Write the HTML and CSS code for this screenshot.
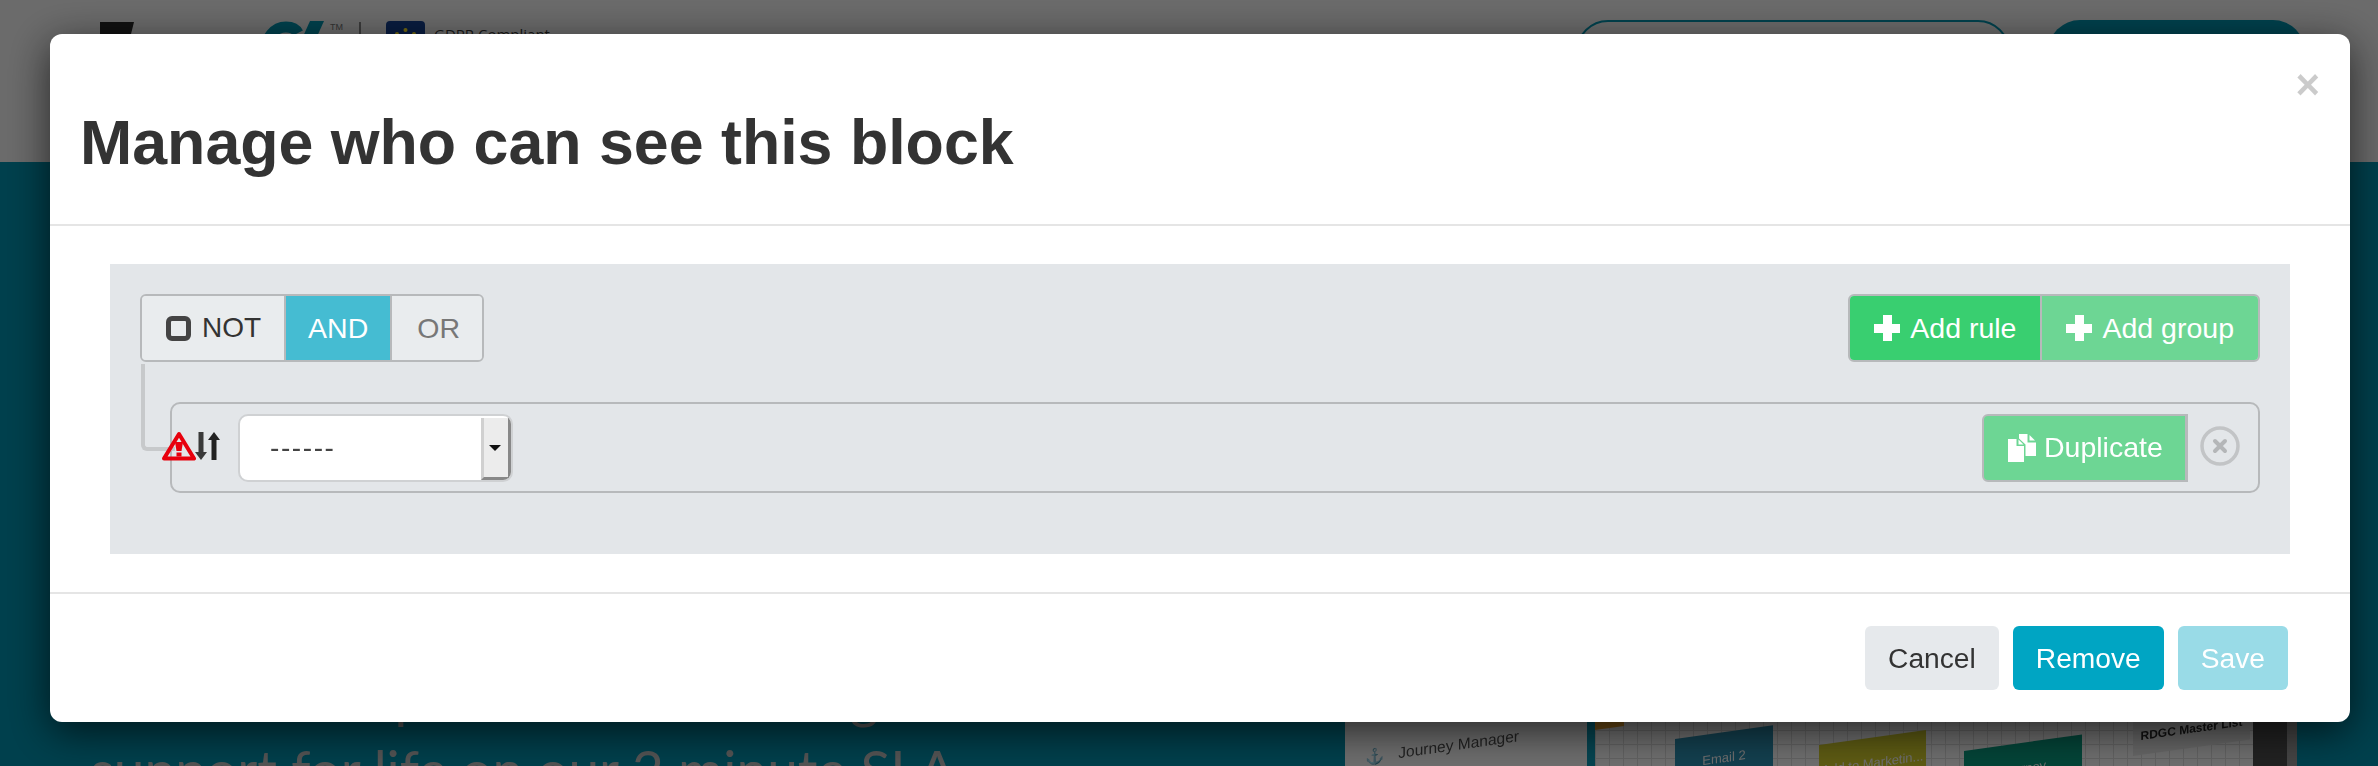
FILE: index.html
```html
<!DOCTYPE html>
<html lang="en">
<head>
    <meta charset="UTF-8">
    <meta name="viewport" content="width=device-width, initial-scale=1.0">
    <title>Manage who can see this block</title>
    <link rel="stylesheet" href="styles.css">
</head>
<body>
    <div class="page">
        <header class="site-header">
            <div class="logo">
                <svg class="logo-mark" viewBox="0 0 34 40">
                    <path d="M0 0 H34 L31 12 H14 V40 H0 Z" fill="#222"/>
                </svg>
                <svg class="logo-swoosh" viewBox="0 0 64 40">
                    <path d="M4 40 C4 14 16 6 26 6 C32 6 36 8 38 12" fill="none" stroke="#00839b" stroke-width="11"/>
                    <path d="M50 0 H64 L46 40 H32 Z" fill="#00839b"/>
                </svg>
                <span class="logo-tm">TM</span>
                <span class="logo-sep"></span>
                <svg class="eu-flag" viewBox="0 0 39 40">
                    <rect width="39" height="40" rx="4" fill="#12397f"/>
                    <circle cx="11" cy="13" r="2" fill="#e8d020"/>
                    <circle cx="19.5" cy="9" r="2" fill="#e8d020"/>
                    <circle cx="28" cy="13" r="2" fill="#e8d020"/>
                </svg>
                <span class="gdpr">GDPR Compliant</span>
            </div>
            <div class="header-actions">
                <span class="pill pill-outline"></span>
                <span class="pill pill-solid"></span>
            </div>
        </header>
        <section class="hero">
            <div class="hero-text">
                <p>Unlimited expert live onboarding and</p>
                <p>support for life on our 2 minute SLA</p>
            </div>
            <div class="hero-shot">
                <div class="shot-side"><span class="shot-label"><span class="shot-anchor">&#9875;</span> Journey Manager</span></div>
                <div class="shot-canvas">
                    <span class="tile tile-orange"></span>
                    <span class="tile tile-blue">Email 2</span>
                    <span class="tile tile-yellow">Add to Marketin...</span>
                    <span class="tile tile-green">Journey</span>
                    <span class="tile tile-grey">RDGC Master List</span>
                </div>
            </div>
        </section>
    </div>

    <div class="backdrop"></div>

    <div class="modal">
        <div class="modal-header">
            <button class="close">&times;</button>
            <h2>Manage who can see this block</h2>
        </div>
        <div class="modal-body">
            <div class="rules-group">
                <div class="group-head">
                    <div class="btn-group">
                        <button class="btn btn-plain btn-not"><span class="check"></span> NOT</button>
                        <button class="btn btn-info btn-logic">AND</button>
                        <button class="btn btn-plain btn-muted btn-logic">OR</button>
                    </div>
                    <div class="btn-group">
                        <button class="btn btn-success"><span class="plus"></span> Add rule</button>
                        <button class="btn btn-success disabled"><span class="plus"></span> Add group</button>
                    </div>
                </div>
                <div class="rule">
                    <svg class="warn" viewBox="0 0 34 30">
                        <path d="M17 3 L32 27.5 H2 Z" fill="none" stroke="#e8000d" stroke-width="4" stroke-linejoin="round"/>
                        <path d="M13 11 H21 L19.5 20 H14.5 Z" fill="#e8000d"/>
                        <rect x="14.5" y="21.5" width="5" height="4" fill="#e8000d"/>
                    </svg>
                    <svg class="sort" viewBox="0 0 25 28">
                        <path d="M3.5 0 H8.5 V20 H12 L6 28 L0 20 H3.5 Z" fill="#3a3a3a"/>
                        <path d="M16.5 28 H21.5 V8 H25 L19 0 L13 8 H16.5 Z" fill="#222"/>
                    </svg>
                    <div class="select">
                        <span class="select-value">------</span>
                        <span class="select-arrow"></span>
                    </div>
                    <div class="rule-actions">
                        <button class="btn btn-success disabled btn-dup">
                            <svg class="dup-icon" viewBox="0 0 28 28">
                                <path d="M0 5 H8.5 V12 H16 V28 H0 Z" fill="#fff"/>
                                <path d="M10.5 5.5 L15.5 10.5 H10.5 Z" fill="#fff"/>
                                <path d="M11 0 H19.5 V8.5 H28 V22 H17.5 V10.5 L11 4.5 Z" fill="#fff"/>
                                <path d="M21.5 1 L27 6.5 H21.5 Z" fill="#fff"/>
                            </svg>
                            Duplicate
                        </button>
                        <svg class="remove" viewBox="0 0 40 40">
                            <circle cx="20" cy="20" r="18" fill="none" stroke="#c2c4c6" stroke-width="3.5"/>
                            <path d="M15 15 L25 25 M25 15 L15 25" stroke="#b4b6b8" stroke-width="4" stroke-linecap="round"/>
                        </svg>
                    </div>
                </div>
            </div>
        </div>
        <div class="modal-footer">
            <button class="foot-btn foot-cancel">Cancel</button>
            <button class="foot-btn foot-remove">Remove</button>
            <button class="foot-btn foot-save">Save</button>
        </div>
    </div>
</body>
</html>
```
FILE: styles.css
```css
* {
    box-sizing: border-box;
}
html, body {
    margin: 0;
    height: 100%;
    overflow: hidden;
}
body {
    font-family: "Liberation Sans", Arial, sans-serif;
    color: #333;
}
button {
    font-family: inherit;
    cursor: pointer;
}

/* page behind the dialog */
.page {
    height: 100vh;
    display: flex;
    flex-direction: column;
    background: #00809a;
}
.site-header {
    height: 162px;
    background: #d6d6d6;
    display: flex;
    justify-content: space-between;
    padding: 20px 73px 0 100px;
}
.logo {
    display: flex;
    align-items: flex-start;
}
.logo-mark {
    width: 34px;
    height: 40px;
    margin-top: 2px;
}
.logo-swoosh {
    width: 64px;
    height: 40px;
    margin: 1px 0 0 126px;
}
.logo-tm {
    font-size: 9px;
    color: #666;
    margin: 2px 0 0 6px;
}
.logo-sep {
    width: 2px;
    height: 40px;
    background: #777;
    margin: 2px 0 0 16px;
}
.eu-flag {
    width: 39px;
    height: 40px;
    margin: 1px 0 0 25px;
}
.gdpr {
    font-family: "Open Sans", sans-serif;
    font-size: 15px;
    color: #333;
    margin: 4px 0 0 9px;
}
.header-actions {
    display: flex;
    gap: 38px;
}
.pill {
    height: 70px;
    border-radius: 32px;
}
.pill-outline {
    width: 434px;
    border: 2px solid #00839b;
}
.pill-solid {
    width: 257px;
    background: #00839b;
}
.hero {
    flex: 1;
    display: flex;
    justify-content: space-between;
    padding-right: 91px;
    align-items: flex-end;
}
.hero-text {
    padding-left: 90px;
    margin-bottom: -39px;
    font-family: "Lato", sans-serif;
    font-size: 55px;
    line-height: 72px;
    color: #aaa;
}
.hero-text p {
    margin: 0;
    white-space: nowrap;
}
.hero-shot {
    width: 942px;
    height: 260px;
    background: #e0e0e0;
    border-right: 34px solid #444;
    box-shadow: 10px 0 0 #8a8a8a;
    display: flex;
    overflow: hidden;
    filter: blur(0.7px);
}
.shot-side {
    width: 250px;
    flex: none;
    background: #dedede;
    border-right: 8px solid #0a8aa3;
    color: #444;
    font-size: 15.5px;
    padding: 232px 0 0 20px;
    white-space: nowrap;
}
.shot-label {
    display: inline-block;
    transform: skewY(-8deg);
}
.shot-anchor {
    margin-right: 10px;
}
.shot-canvas {
    flex: 1;
    position: relative;
    background-color: #e0e0e0;
    background-image: linear-gradient(#c6c6c6 1px, transparent 1px), linear-gradient(90deg, #c6c6c6 1px, transparent 1px);
    background-size: 14px 14px;
}
.tile {
    position: absolute;
    color: #ddd;
    font-size: 13px;
    text-align: center;
    transform-origin: 0 0;
    transform: skewY(-8deg);
    padding-top: 18px;
    height: 60px;
}
.tile-orange {
    left: 0;
    top: 192px;
    width: 29px;
    height: 32px;
    background: #d8962a;
}
.tile-blue {
    left: 80px;
    top: 233px;
    width: 98px;
    background: #27809f;
}
.tile-yellow {
    left: 224px;
    top: 239px;
    width: 107px;
    background: #bdb827;
}
.tile-green {
    left: 369px;
    top: 245px;
    width: 118px;
    background: #078a71;
}
.tile-grey {
    left: 538px;
    top: 190px;
    width: 117px;
    padding-top: 34px;
    font-size: 12px;
    white-space: nowrap;
    background: #cfcfcf;
    color: #222;
    font-weight: bold;
}

.backdrop {
    position: fixed;
    inset: 0;
    background: rgba(0, 0, 0, 0.5);
}

/* dialog */
.modal {
    position: fixed;
    left: 50px;
    top: 34px;
    width: 2300px;
    height: 688px;
    background: #fff;
    border-radius: 12px;
    box-shadow: 0 10px 40px rgba(0, 0, 0, 0.65);
    display: flex;
    flex-direction: column;
}
.modal-header {
    height: 192px;
    border-bottom: 2px solid #e5e5e5;
    padding: 0 30px;
}
.modal-header h2 {
    margin: 0;
    padding-top: 70px;
    font-size: 62.7px;
    line-height: 76px;
    font-weight: bold;
}
.close {
    float: right;
    border: 0;
    padding: 0;
    margin-top: 30px;
    background: none;
    font-size: 42px;
    line-height: 42px;
    font-weight: bold;
    color: #000;
    opacity: 0.2;
}
.modal-body {
    padding: 38px 60px 38px;
}
.rules-group {
    height: 290px;
    background: #e3e6e9;
    padding: 30px;
}
.group-head {
    display: flex;
    justify-content: space-between;
    margin-bottom: 40px;
}
.btn-group {
    display: flex;
    height: 68px;
    border: 2px solid #b7b9bb;
    border-radius: 6px;
    overflow: hidden;
}
.btn {
    border: 0;
    font-size: 28.5px;
    padding: 0 24px;
    display: flex;
    align-items: center;
    gap: 10px;
}
.btn-group .btn + .btn {
    border-left: 2px solid #b7b9bb;
}
.btn-plain {
    background: #e9ecee;
    color: #333;
}
.btn-muted {
    color: #777;
}
.btn-info {
    background: #45bcd2;
    color: #fff;
}
.btn-success {
    background: #39cf70;
    color: #fff;
}
.btn-success.disabled {
    background: #6dd694;
}
.btn-not {
    font-size: 28px;
    padding: 0 23px 0 24px;
    gap: 11px;
}
.btn-logic {
    padding: 0 22px;
}
.btn-muted.btn-logic {
    padding-left: 25px;
}
.check {
    width: 25px;
    height: 25px;
    border: 5px solid #444;
    border-radius: 6px;
}
.plus {
    width: 26px;
    height: 26px;
    background:
        linear-gradient(#fff, #fff) center / 100% 9px no-repeat,
        linear-gradient(#fff, #fff) center / 9px 100% no-repeat;
    border-radius: 2px;
}

.rule {
    position: relative;
    height: 91px;
    margin-left: 30px;
    border: 2px solid #b7b9bb;
    border-radius: 10px;
    display: flex;
    align-items: center;
    padding-left: 23px;
}
.rule::before {
    content: "";
    position: absolute;
    left: -31px;
    top: -40px;
    width: 30px;
    height: 83px;
    border-left: 4px solid #c7c9cb;
    border-bottom: 4px solid #c7c9cb;
    border-radius: 0 0 0 6px;
}
.warn {
    position: absolute;
    left: -10px;
    top: 27px;
    width: 34px;
    height: 30px;
}
.sort {
    width: 25px;
    height: 28px;
    flex: none;
    margin-bottom: 3px;
}
.select {
    width: 275px;
    height: 68px;
    margin-left: 18px;
    background: #fff;
    border: 2px solid #cfd1d3;
    border-radius: 10px;
    display: flex;
    justify-content: space-between;
    overflow: hidden;
}
.select-value {
    font-size: 28px;
    letter-spacing: 1.6px;
    color: #444;
    line-height: 64px;
    padding-left: 30px;
}
.select-arrow {
    width: 30px;
    margin-top: 2px;
    background: #ececec;
    border-left: 3px solid #d0d0d0;
    border-right: 3px solid #888;
    border-bottom: 3px solid #888;
    position: relative;
}
.select-arrow::after {
    content: "";
    position: absolute;
    left: 5px;
    top: 27px;
    border: 5px solid transparent;
    border-top: 6px solid #111;
    border-left-width: 6px;
    border-right-width: 6px;
}
.rule-actions {
    margin-left: auto;
    display: flex;
    align-items: center;
    gap: 12px;
    padding-right: 18px;
}
.btn-dup {
    width: 206px;
    height: 68px;
    border: 2px solid #b7b9bb;
    border-right-width: 3px;
    border-radius: 6px 0 0 6px;
    padding: 0 0 0 24px;
    gap: 8px;
}
.dup-icon {
    width: 28px;
    height: 28px;
    flex: none;
}
.remove {
    width: 40px;
    height: 40px;
    margin-bottom: 4px;
}

.modal-footer {
    flex: 1;
    border-top: 2px solid #e5e5e5;
    display: flex;
    justify-content: flex-end;
    gap: 14px;
    padding: 32px 62px 0 0;
}
.foot-btn {
    height: 64px;
    border: 0;
    border-radius: 6px;
    padding: 0 23px;
    font-size: 28.2px;
}
.foot-cancel {
    background: #e6e9ec;
    color: #333;
}
.foot-remove {
    background: #00a5c3;
    color: #fff;
}
.foot-save {
    background: #99dbe7;
    color: #fff;
}
```
